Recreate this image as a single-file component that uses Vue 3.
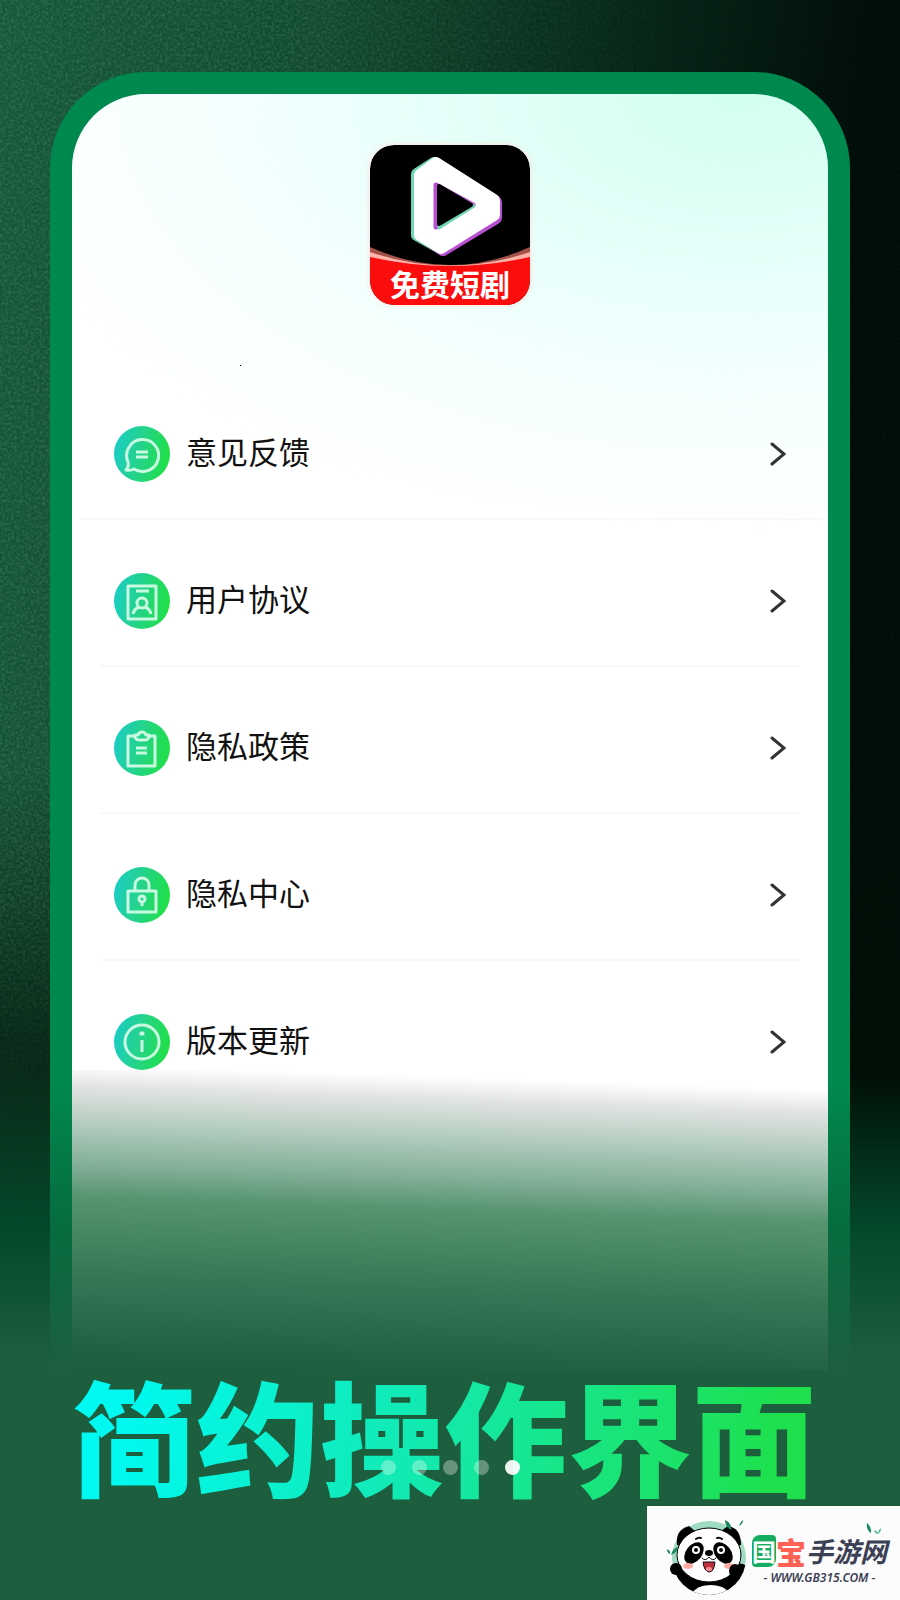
<template>
	<main class="poster">
		<svg class="poster__grain" aria-hidden="true">
			<filter id="grain">
				<feTurbulence type="fractalNoise" baseFrequency="0.35" numOctaves="3" seed="4" />
				<feColorMatrix values="0 0 0 0 0.4  0 0 0 0 0.75  0 0 0 0 0.55  0 1.6 0 0 -0.6" />
			</filter>
			<rect width="100%" height="100%" filter="url(#grain)" />
		</svg>

		<section class="phone">
			<div class="screen">
				<header class="screen__header">
					<svg class="logo" viewBox="0 0 160 160" role="img" aria-label="免费短剧">
						<defs>
							<clipPath id="logoClip">
								<rect width="160" height="160" rx="24" />
							</clipPath>
						</defs>
						<g clip-path="url(#logoClip)">
							<rect width="160" height="160" />
							<path d="M0 102Q80 138 160 102V125H0Z" fill="#a3504a" />
							<path d="M0 107Q80 134 160 107V125H0Z" fill="#ffb3aa" />
							<path d="M0 112Q80 130 160 112V160H0Z" fill="#fb0d0d" />
							<g stroke-width="12" stroke-linejoin="round">
								<path d="M47 29L64 18L125 57V71L72 104L47 90Z" fill="#6fd6b4" stroke="#6fd6b4" />
								<path d="M53 33L69 21L126 57V73L73 105L53 91Z" fill="#b84fd0" stroke="#b84fd0" />
								<path d="M50 30L66 18L124 55V70L71 103L50 90Z" fill="#fff" stroke="#fff" />
							</g>
							<path d="M66 40L103 60L66 82Z" fill="#b84fd0" stroke="#b84fd0" stroke-width="5" stroke-linejoin="round" />
							<path d="M69 43L104 61L69 83Z" fill="#6fd6b4" stroke="#6fd6b4" stroke-width="3" stroke-linejoin="round" />
							<path d="M69 41L101 60L69 79Z" stroke="#000" stroke-width="4" stroke-linejoin="round" />
							<text x="80" y="151" text-anchor="middle" class="logo__text">免费短剧</text>
						</g>
					</svg>
					<span class="speck"></span>
				</header>

				<ul class="menu">
					<li v-for="item in items" :key="item.icon" class="menu__item">
						<button type="button" class="menu__button">
							<svg class="menu__icon" viewBox="0 0 56 56" aria-hidden="true">
								<defs>
									<linearGradient :id="'g-' + item.icon" x1="0" x2="1" y1="0.4" y2="0.6">
										<stop offset="0" stop-color="#1bcdc4" />
										<stop offset="0.45" stop-color="#24d38a" />
										<stop offset="1" stop-color="#20e044" />
									</linearGradient>
								</defs>
								<circle cx="28" cy="28" r="28" :fill="`url(#g-${item.icon})`" />
								<g class="menu__strokes">
									<path v-for="d in item.paths" :key="d" :d="d" />
								</g>
							</svg>
							<span class="menu__label">{{ item.label }}</span>
							<svg class="menu__arrow" viewBox="0 0 16 24" aria-hidden="true">
								<path d="M2 2L14 12L2 22" />
							</svg>
						</button>
					</li>
				</ul>
				<div class="screen__fade"></div>
			</div>
		</section>

		<div class="headline">
			<h1>简约操作界面</h1>
			<div class="dots">
				<button
					v-for="n in 5"
					:key="n"
					type="button"
					class="dots__dot"
					:class="{ active: n === current }"
					:aria-label="String(n)"
					@click="current = n"
				></button>
			</div>
		</div>

		<footer class="site">
			<svg class="site__panda" viewBox="0 0 84 76" aria-hidden="true">
				<defs>
					<clipPath id="pandaClip">
						<circle cx="42" cy="39" r="37" />
					</clipPath>
				</defs>
				<circle cx="42" cy="39" r="37" fill="#9fdcc2" />
				<g clip-path="url(#pandaClip)">
					<path d="M3 46Q11 42 17 50H67Q71 40 81 48V76H3Z" />
					<path d="M24 76Q29 66 43 66Q59 66 63 76Z" fill="#fff" />
				</g>
				<path d="M10 26Q8 11 22 7L28 12L16 27Z" />
				<path d="M74 26Q74 9 61 7L54 12L68 27Z" />
				<ellipse cx="42" cy="36" rx="32" ry="27" fill="#fff" stroke="#000" />
				<ellipse cx="27" cy="34" rx="8" ry="12" transform="rotate(38 27 34)" />
				<ellipse cx="56" cy="34" rx="8" ry="12" transform="rotate(-38 56 34)" />
				<g fill="#fff">
					<circle cx="29" cy="31" r="4" />
					<circle cx="54" cy="31" r="4" />
				</g>
				<circle cx="29" cy="31" r="2" />
				<circle cx="54" cy="31" r="2" />
				<g fill="none" stroke="#111" stroke-width="2" stroke-linecap="round">
					<path d="M29 20Q31 18 34 19" />
					<path d="M50 19Q53 18 55 20" />
					<path d="M35 39Q38 43 42 38Q46 43 49 39" stroke-width="1" />
				</g>
				<ellipse cx="42" cy="34" rx="4" ry="3" />
				<path d="M36 43H48Q47 53 42 53Q37 52 36 43Z" fill="#bd2f3c" stroke="#111" />
				<ellipse cx="42" cy="50" rx="3" ry="2" fill="#ff8d92" />
				<ellipse cx="21" cy="47" rx="5" ry="3" fill="#ffaaa0" />
				<ellipse cx="62" cy="47" rx="5" ry="3" fill="#ffaaa0" />
				<ellipse cx="68" cy="52" rx="6" ry="7" />
				<ellipse cx="9" cy="50" rx="6" ry="6" />
				<g fill="#19885c">
					<path d="M58 1Q65 4 64 11Q58 8 58 1Z" />
					<path d="M4 36Q6 29 11 28Q10 34 4 36Z" />
					<path d="M0 30Q4 32 3 35Q0 34 0 30Z" />
					<path d="M72 7Q74 2 76 1Q76 5 72 7Z" />
				</g>
			</svg>
			<div class="site__text">
				<svg class="site__leaf" viewBox="0 0 16 12" aria-hidden="true">
					<path d="M1 0Q6 4 5 10Q0 7 1 0Z" fill="#19885c" />
					<path d="M8 7Q12 8 12 11Q9 11 8 7ZM15 5Q15 9 12 11Q12 7 15 5Z" fill="#58b894" />
				</svg>
				<p class="site__name">
					<b class="site__guo">国</b><b class="site__bao">宝</b><b class="site__rest">手游网</b>
				</p>
				<a class="site__url" href="#">- WWW.GB315.COM -</a>
			</div>
		</footer>
	</main>
</template>

<script setup>
import { ref } from "vue";

const current = ref(5);

const items = [
	{
		icon: "feedback",
		label: "意见反馈",
		paths: [
			"M14 36A16 16 0 1 1 20 43Q16 45 12 44Q15 41 14 36Z",
			"M22 26H34M22 31H34",
		],
	},
	{
		icon: "agreement",
		label: "用户协议",
		paths: [
			"M14 13H42V46H14Z",
			"M22 18H35",
			"M28 25A5 5 0 1 1 28 35A5 5 0 1 1 28 25Z",
			"M19 41Q20 36 25 34M31 34Q36 36 37 41",
		],
	},
	{
		icon: "policy",
		label: "隐私政策",
		paths: [
			"M21 16H14V46H41V16H35",
			"M21 15H24Q25 12 28 12Q31 12 32 15H35V17Q34 20 31 20H25Q22 20 21 17Z",
			"M22 28H33M22 33H33",
		],
	},
	{
		icon: "privacy",
		label: "隐私中心",
		paths: [
			"M14 24H42V45H14Z",
			"M21 23V18A7 7 0 0 1 35 18V23",
			"M28 29A3 3 0 1 1 28 35A3 3 0 1 1 28 29ZM28 35V39",
		],
	},
	{
		icon: "version",
		label: "版本更新",
		paths: [
			"M28 11A17 17 0 1 1 28 45A17 17 0 1 1 28 11Z",
			"M27 19H29V20H27Z",
			"M28 26V38",
		],
	},
];
</script>

<style>
body {
	background: #1d5e3e;
}
</style>

<style scoped>
.poster {
	position: relative;
	display: flex;
	flex-direction: column;
	box-sizing: border-box;
	min-height: 100vh;
	padding-top: 72px;
	font-family: "Noto Sans CJK SC", sans-serif;
	background:
		linear-gradient(180deg, transparent 67%, #04492b 77%, #1d5e3e 85%),
		linear-gradient(180deg, transparent 48%, rgba(0, 15, 5, 0.6) 65%),
		linear-gradient(97deg, #17573a 0%, #114a2e 30%, #062417 60%, #010d08 80%, #010d08 100%);
}

.poster__grain {
	position: absolute;
	top: 0;
	left: 0;
	width: 100%;
	height: 70%;
	opacity: 0.22;
	mask-image: linear-gradient(90deg, #000 30%, rgba(0, 0, 0, 0.15) 75%), linear-gradient(#000 80%, transparent);
	mask-composite: intersect;
}

.phone {
	position: relative;
	margin: 0 50px;
	padding: 22px 22px 0;
	border-radius: 96px 96px 0 0;
	background: linear-gradient(180deg, #00894f calc(100% - 290px), #066d3f calc(100% - 150px), #1d5e3e 100%);
}

.screen {
	overflow: hidden;
	border-radius: 74px 74px 0 0;
	background: radial-gradient(ellipse 700px 400px at 88% 0, #d2fff0 0, #e0fff7 30%, #f0fffd 65%, #fff 110%) #fff;
}

.screen__header {
	display: flex;
	flex-direction: column;
	align-items: center;
	box-sizing: border-box;
	height: 279px;
	padding-top: 51px;
}

.logo {
	width: 160px;
	height: 160px;
	border-radius: 24px;
	box-shadow: 0 0 4px 1px rgba(255, 225, 220, 0.9);
}

.logo__text {
	fill: #fff;
	font-size: 30px;
	font-weight: 700;
}

.speck {
	align-self: flex-start;
	width: 1px;
	height: 1px;
	margin: 60px 0 0 168px;
	background: #000;
}

.menu {
	margin: 0;
	padding: 0;
	list-style: none;
}

.menu__item {
	background: linear-gradient(#f7f8f8, #f7f8f8) center bottom / calc(100% - 56px) 2px no-repeat;
}

.menu__item:first-child {
	background-size: calc(100% - 12px) 2px;
}

.menu__item:last-child {
	background: none;
}

.menu__button {
	display: flex;
	align-items: center;
	width: 100%;
	padding: 53px 42px 38px;
	border: 0;
	background: none;
	font: inherit;
	color: #111;
	text-align: left;
	cursor: pointer;
}

.menu__item:last-child .menu__button {
	padding-bottom: 0;
}

.menu__icon {
	width: 56px;
	height: 56px;
	margin-right: 16px;
}

.menu__strokes {
	fill: none;
	stroke: #c8f9e2;
	stroke-width: 3;
	stroke-linejoin: round;
}

.menu__label {
	flex: 1;
	padding-bottom: 6px;
	font-size: 31px;
	line-height: 50px;
}

.menu__arrow {
	width: 16px;
	height: 24px;
	fill: none;
	stroke: #333;
	stroke-width: 3;
	stroke-linecap: round;
}

.screen__fade {
	height: 301px;
	background: linear-gradient(
		182deg,
		#fff 6%,
		#e2e4e3 13%,
		#b5cdc0 24%,
		#82af97 37%,
		#55946f 47%,
		#45855f 59%,
		#347353 74%,
		#266647 88%,
		#1d5e3e 97%
	);
}

.headline {
	position: relative;
	text-align: center;
}

h1 {
	margin: 0;
	padding: 0 12px 10px 0;
	font-size: 124px;
	font-weight: 900;
	line-height: 124px;
	white-space: nowrap;
	background: linear-gradient(100deg, #00f9f0 14%, #12eab4 45%, #1ee04c 86%);
	background-clip: text;
	color: transparent;
}

.dots {
	position: absolute;
	right: 0;
	bottom: 30px;
	left: 0;
	display: flex;
	justify-content: center;
	gap: 16px;
}

.dots__dot {
	width: 15px;
	height: 15px;
	padding: 0;
	border: 0;
	border-radius: 50%;
	background: rgba(255, 255, 255, 0.33);
}

.dots__dot.active {
	background: rgba(255, 255, 255, 0.93);
}

.site {
	position: relative;
	display: flex;
	align-items: center;
	align-self: flex-end;
	box-sizing: border-box;
	width: 253px;
	height: 94px;
	margin-top: auto;
	padding: 8px 12px 0 20px;
	background: #fbfcfb;
}

.site__panda {
	width: 84px;
	height: 76px;
	flex: none;
}

.site__text {
	position: relative;
	flex: 1;
	padding-top: 6px;
	text-align: center;
}

.site__leaf {
	position: absolute;
	top: -4px;
	right: 6px;
	width: 16px;
	height: 12px;
}

.site__name {
	display: flex;
	align-items: center;
	justify-content: center;
	margin: 0;
	line-height: 36px;
	white-space: nowrap;
}

.site__guo {
	border-radius: 8px 4px;
	background: #14ad60;
	color: #fff;
	font-size: 24px;
	line-height: 32px;
}

.site__bao {
	color: #ff6254;
	font-size: 30px;
	font-weight: 900;
}

.site__rest {
	color: #3b4055;
	font-size: 27px;
	font-style: italic;
	font-weight: 700;
}

.site__url {
	display: block;
	color: #3b4055;
	font-family: "Noto Sans", sans-serif;
	font-size: 12px;
	font-style: italic;
	font-weight: 600;
	line-height: 18px;
	text-decoration: none;
	white-space: nowrap;
}
</style>
